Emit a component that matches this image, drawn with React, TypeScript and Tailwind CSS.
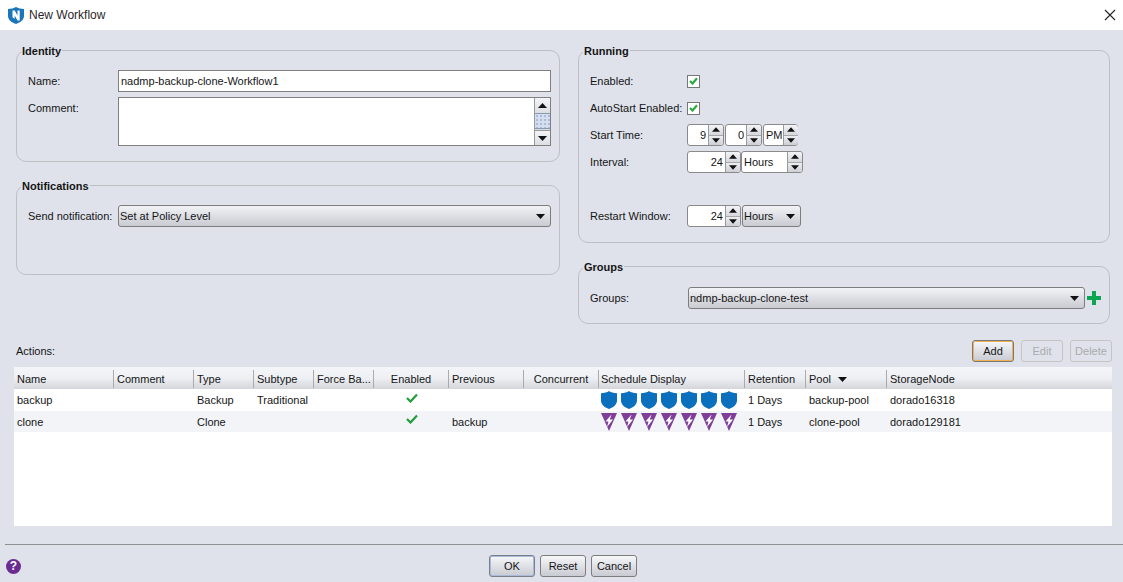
import React from "react";

const Tri: React.FC<{ down?: boolean; w?: number }> = ({ down, w = 9 }) => (
  <svg width={w} height={5} viewBox="0 0 9 5" className="block shrink-0">
    <path d={down ? "M0 0h9L4.5 5z" : "M0 5h9L4.5 0z"} fill="#111" />
  </svg>
);

const Spin: React.FC = () => (
  <div className="w-[15px] h-full flex flex-col shrink-0 border-l border-[#9a9a9a] rounded-r-[3px] overflow-hidden">
    <div className="flex-1 flex items-center justify-center bg-gradient-to-b from-[#f3f4f7] to-[#d6d8de]">
      <Tri w={8} />
    </div>
    <div className="flex-1 flex items-center justify-center bg-gradient-to-b from-[#eceef2] to-[#cdcfd6] border-t border-[#a8a8a8]">
      <Tri down w={8} />
    </div>
  </div>
);

const Spinner: React.FC<{ value: string; w: string; left?: boolean }> = ({ value, w, left }) => (
  <div className={`${w} h-[22px] flex border border-[#8a8a8a] rounded-[3px] bg-white`}>
    <div className={`flex-1 flex items-center ${left ? "justify-start pl-[2px]" : "justify-end pr-[2px]"}`}>{value}</div>
    <Spin />
  </div>
);

const Combo: React.FC<{ value: string; w: string }> = ({ value, w }) => (
  <div className={`${w} h-[22px] flex items-center justify-between pl-[1px] pr-[5px] border border-[#7d7d7d] rounded-[3px] bg-gradient-to-b from-[#f2f3f6] to-[#c9cbd2]`}>
    <span>{value}</span>
    <Tri down />
  </div>
);

const Check = () => (
  <div className="w-[13px] h-[13px] flex items-center justify-center border border-[#777] bg-white">
    <svg width="9" height="8" viewBox="0 0 9 8">
      <path d="M1 4l2.5 2.5L8 1.200" fill="none" stroke="#2ea843" strokeWidth="2.200" />
    </svg>
  </div>
);

const Btn: React.FC<{ label: string; w: string; kind?: "focus" | "default" | "off" }> = ({ label, w, kind }) => {
  if (kind === "off") {
    return <div className={`${w} h-[22px] flex items-center justify-center border border-[#c4c5c2] rounded-[3px] text-[#a9abad]`}>{label}</div>;
  }
  const ring =
    kind === "focus"
      ? "border-[#77797f] shadow-[inset_0_0_0_1px_#f3b04f]"
      : kind === "default"
        ? "border-[#7a7f8a] shadow-[inset_0_0_0_1px_#a9bbd8]"
        : "border-[#7d7d7d]";
  return (
    <div className={`${w} h-[22px] flex items-center justify-center border rounded-[3px] bg-gradient-to-b from-[#f6f7f9] to-[#c9cbd2] ${ring}`}>
      {label}
    </div>
  );
};

const Panel: React.FC<{ title: string; h: string; children: React.ReactNode }> = ({ title, h, children }) => (
  <fieldset className={`${h} border border-[#bdbfc3] rounded-[10px] pl-[11px] pr-[8px]`}>
    <legend className="-ml-[7px] px-[1px] h-[13px] leading-[15px] font-bold">{title}</legend>
    {children}
  </fieldset>
);

const Shield = () => (
  <svg width="16" height="18" viewBox="0 0 16 18" className="shrink-0">
    <path d="M8 0c1.800 1.300 4.500 2.100 8 2.300V9.500C16 13.500 12.500 16.500 8 18 3.500 16.500 0 13.500 0 9.500V2.300C3.500 2.100 6.200 1.300 8 0z" fill="#0a70bd" />
  </svg>
);

const Bolt = () => (
  <svg width="16" height="18" viewBox="0 0 16 18" className="shrink-0">
    <path d="M0 0h16L8 18z" fill="#7f3f98" />
    <path d="M10.500 1.500L4.500 8.500h3L6 14l6-7.500H8.800z" fill="#fff" />
  </svg>
);

const columns = ["Name", "Comment", "Type", "Subtype", "Force Ba...", "Enabled", "Previous", "Concurrent", "Schedule Display", "Retention", "Pool", "StorageNode"];
const gridCols = "grid-cols-[100px_80px_60px_60px_60px_75px_75px_75px_146px_61px_81px_1fr]";
const centered = ["Enabled", "Concurrent"];

const rows = [
  { name: "backup", type: "Backup", subtype: "Traditional", previous: "", icon: <Shield />, pool: "backup-pool", node: "dorado16318", bg: "bg-white h-[22px]", text: "" },
  { name: "clone", type: "Clone", subtype: "", previous: "backup", icon: <Bolt />, pool: "clone-pool", node: "dorado129181", bg: "bg-[#f2f4f8] h-[21px]", text: "pt-px" },
];

const days = [0, 1, 2, 3, 4, 5, 6];

export default function App() {
  return (
    <div className="w-[1123px] h-[582px] overflow-hidden flex flex-col bg-[#dfe2eb] text-[11px] text-[#151515] font-['Liberation_Sans',Arial,sans-serif]">
      {/* Title bar */}
      <div className="h-[30px] shrink-0 bg-white flex items-center pl-[8px] pr-[7px]">
        <svg width="16" height="17" viewBox="0 0 16 17">
          <path d="M8 0c2 1.300 5 2 8 2v7c0 3.600-3.200 6.400-8 8-4.800-1.600-8-4.400-8-8V2c3 0 6-.7 8-2z" fill="#1b75bb" />
          <path d="M4.500 3.500h2.200l2.800 5v-5h2.200v10H9.500L6.700 8.500v3.200l-2.200-1.400z" fill="#fff" />
        </svg>
        <span className="ml-[5px] text-[12px] text-[#2a1f2a]">New Workflow</span>
        <svg width="12" height="12" viewBox="0 0 12 12" className="ml-auto">
          <path d="M1 1l10 10M11 1L1 11" stroke="#222" strokeWidth="1.100" />
        </svg>
      </div>

      {/* Form panels */}
      <div className="mt-[14px] ml-[16px] flex gap-[18px]">
        <div className="w-[544px] flex flex-col gap-[17px]">
          <Panel title="Identity" h="h-[118px]">
            <div className="mt-[13px] flex items-center h-[22px]">
              <span className="w-[90px]">Name:</span>
              <div className="flex-1 h-full flex items-center pl-[2px] border border-[#808080] bg-white">nadmp-backup-clone-Workflow1</div>
            </div>
            <div className="mt-[5px] flex">
              <span className="w-[90px] pt-[3px]">Comment:</span>
              <div className="flex-1 h-[49px] flex justify-end border border-[#808080] bg-white">
                <div className="w-[16px] flex flex-col bg-[#d9dbe2] border-l border-[#9a9a9a]">
                  <div className="h-[15px] flex items-center justify-center bg-gradient-to-b from-[#f3f4f7] to-[#dcdee4]">
                    <Tri />
                  </div>
                  <div className="h-[16px] border-y border-[#8a9ab0] bg-[#d3deef] bg-[radial-gradient(#a9b9d4_0.7px,transparent_0.8px)] bg-[length:4px_4px]" />
                  <div className="mt-auto h-[15px] flex items-center justify-center bg-gradient-to-b from-[#f3f4f7] to-[#dcdee4] border-t border-[#9a9a9a]">
                    <Tri down />
                  </div>
                </div>
              </div>
            </div>
          </Panel>
          <Panel title="Notifications" h="h-[96px]">
            <div className="mt-[13px] flex items-center">
              <span className="w-[90px]">Send notification:</span>
              <Combo value="Set at Policy Level" w="flex-1" />
            </div>
          </Panel>
        </div>

        <div className="w-[532px] flex flex-col gap-[17px]">
          <Panel title="Running" h="h-[199px]">
            <div className="mt-[13px] flex flex-col gap-[5px]">
              <div className="h-[22px] flex items-center">
                <span className="w-[97px]">Enabled:</span>
                <Check />
              </div>
              <div className="h-[22px] flex items-center">
                <span className="w-[97px]">AutoStart Enabled:</span>
                <Check />
              </div>
              <div className="h-[22px] flex items-center">
                <span className="w-[97px]">Start Time:</span>
                <div className="flex gap-px">
                  <Spinner value="9" w="w-[37px]" />
                  <Spinner value="0" w="w-[37px]" />
                  <Spinner value="PM" w="w-[35px]" left />
                </div>
              </div>
              <div className="h-[22px] flex items-center">
                <span className="w-[97px]">Interval:</span>
                <div className="flex">
                  <Spinner value="24" w="w-[54px]" />
                  <Spinner value="Hours" w="w-[62px]" left />
                </div>
              </div>
              <div className="mt-[27px] h-[22px] flex items-center">
                <span className="w-[97px]">Restart Window:</span>
                <div className="flex gap-px">
                  <Spinner value="24" w="w-[54px]" />
                  <Combo value="Hours" w="w-[59px]" />
                </div>
              </div>
            </div>
          </Panel>
          <Panel title="Groups" h="h-[64px]">
            <div className="mt-[14px] flex items-center">
              <span className="w-[98px]">Groups:</span>
              <Combo value="ndmp-backup-clone-test" w="w-[397px]" />
              <svg width="14" height="14" viewBox="0 0 14 14" className="ml-[2px]">
                <path d="M5 0h4v5h5v4H9v5H5V9H0V5h5z" fill="#0ca550" />
              </svg>
            </div>
          </Panel>
        </div>
      </div>

      {/* Actions */}
      <div className="mt-[16px] mr-[11px] ml-[16px] flex items-center justify-between h-[22px]">
        <span>Actions:</span>
        <div className="flex gap-[7px]">
          <Btn label="Add" w="w-[42px]" kind="focus" />
          <Btn label="Edit" w="w-[42px]" kind="off" />
          <Btn label="Delete" w="w-[42px]" kind="off" />
        </div>
      </div>

      <div className="mt-[5px] ml-[14px] w-[1098px] h-[159px] bg-white">
        <div className={`grid ${gridCols} h-[22px] bg-gradient-to-b from-[#f3f5f9] via-[#eef0f4] to-[#d3d5da]`}>
          {columns.map((c) => (
            <div key={c} className={`flex items-center pt-px border-r border-[#a9abb0] my-[3px] ${centered.includes(c) ? "justify-center" : c === "Schedule Display" ? "pl-[2px]" : "pl-[3px]"} last:border-r-0`}>
              {c}
              {c === "Pool" && (
                <svg width="9" height="5" viewBox="0 0 9 5" className="ml-[7px]">
                  <path d="M0 0h9L4.500 5z" fill="#111" />
                </svg>
              )}
            </div>
          ))}
        </div>
        {rows.map((r) => (
          <div key={r.name} className={`grid ${gridCols} items-center ${r.bg}`}>
            <div className={`pl-[3px] ${r.text}`}>{r.name}</div>
            <div />
            <div className={`pl-[3px] ${r.text}`}>{r.type}</div>
            <div className={`pl-[3px] ${r.text}`}>{r.subtype}</div>
            <div />
            <div className="flex justify-center">
              <svg width="12" height="10" viewBox="0 0 12 10" className="-mt-[5px]">
                <path d="M1 5l3.500 3.500L11 1.500" fill="none" stroke="#1f9d3a" strokeWidth="2.200" />
              </svg>
            </div>
            <div className={`pl-[3px] ${r.text}`}>{r.previous}</div>
            <div />
            <div className="flex gap-[4px] pl-[2px]">
              {days.map((d) => (
                <React.Fragment key={d}>{r.icon}</React.Fragment>
              ))}
            </div>
            <div className={`pl-[3px] ${r.text}`}>1 Days</div>
            <div className={`pl-[3px] ${r.text}`}>{r.pool}</div>
            <div className={`pl-[3px] ${r.text}`}>{r.node}</div>
          </div>
        ))}
      </div>

      {/* Footer */}
      <div className="mt-[18px] ml-[5px] h-px bg-[#8f9094]" />
      <div className="mt-[10px] pl-[6px] flex items-center">
        <div className="w-[15px] h-[15px] rounded-full bg-[#6a2c91] text-white font-bold text-[12px] leading-none flex items-center justify-center">?</div>
        <div className="ml-[468px] flex gap-[5px]">
          <Btn label="OK" w="w-[46px]" kind="default" />
          <Btn label="Reset" w="w-[46px]" />
          <Btn label="Cancel" w="w-[46px]" />
        </div>
      </div>
    </div>
  );
}
